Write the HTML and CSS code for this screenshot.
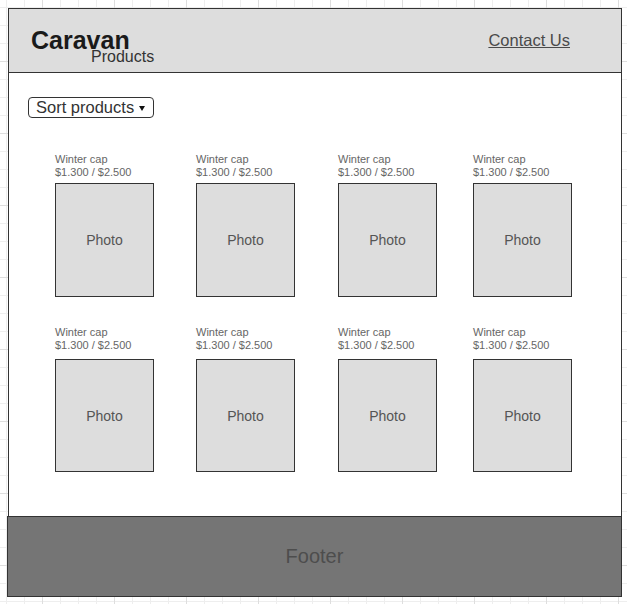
FILE: index.html
```html
<!DOCTYPE html>
<html lang="en">
<head>
    <meta charset="UTF-8">
    <meta name="viewport" content="width=device-width, initial-scale=1.0">
    <title>Caravan - Products</title>
    <link rel="stylesheet" href="styles.css">
</head>
<body>
    <div class="page">
        <header class="site-header">
            <div class="brand">
                <h1>Caravan</h1>
                <span class="subtitle">Products</span>
            </div>
            <a href="#" class="contact">Contact Us</a>
        </header>

        <main class="content">
            <button class="sort-btn">Sort products <span class="caret"></span></button>

            <div class="product-grid">
                <div class="product">
                    <div class="product-info">Winter cap<br>$1.300 / $2.500</div>
                    <div class="photo">Photo</div>
                </div>
                <div class="product">
                    <div class="product-info">Winter cap<br>$1.300 / $2.500</div>
                    <div class="photo">Photo</div>
                </div>
                <div class="product">
                    <div class="product-info">Winter cap<br>$1.300 / $2.500</div>
                    <div class="photo">Photo</div>
                </div>
                <div class="product">
                    <div class="product-info">Winter cap<br>$1.300 / $2.500</div>
                    <div class="photo">Photo</div>
                </div>
                <div class="product">
                    <div class="product-info">Winter cap<br>$1.300 / $2.500</div>
                    <div class="photo">Photo</div>
                </div>
                <div class="product">
                    <div class="product-info">Winter cap<br>$1.300 / $2.500</div>
                    <div class="photo">Photo</div>
                </div>
                <div class="product">
                    <div class="product-info">Winter cap<br>$1.300 / $2.500</div>
                    <div class="photo">Photo</div>
                </div>
                <div class="product">
                    <div class="product-info">Winter cap<br>$1.300 / $2.500</div>
                    <div class="photo">Photo</div>
                </div>
            </div>
        </main>

        <footer class="site-footer">Footer</footer>
    </div>
</body>
</html>
```

FILE: styles.css
```css
body {
    margin: 0;
    font-family: 'Liberation Sans', Arial, sans-serif;
    background-color: #ffffff;
    background-image:
        linear-gradient(to right, #dedede 1px, transparent 1px),
        linear-gradient(to bottom, #dedede 1px, transparent 1px),
        linear-gradient(to right, #eeeeee 1px, transparent 1px),
        linear-gradient(to bottom, #eeeeee 1px, transparent 1px);
    background-size: 72px 72px, 72px 72px, 18px 18px, 18px 18px;
    background-position: 42px 61px, 42px 61px, 6px 7px, 6px 7px;
    height: 604px;
}

.page {
    padding: 8px 0 0 8px;
    width: 614px;
}

.site-header {
    display: flex;
    justify-content: space-between;
    align-items: flex-start;
    height: 65px;
    box-sizing: border-box;
    padding: 19px 51px 0 22px;
    background: #dddddd;
    border: 1px solid #333333;
}

.brand h1 {
    margin: 0;
    font-size: 25px;
    line-height: 25px;
    font-weight: bold;
    color: #1a1a1a;
}

.subtitle {
    display: block;
    margin: -4px 0 0 60px;
    font-size: 16px;
    line-height: 16px;
    color: #333333;
}

.contact {
    margin-top: 4px;
    font-size: 16.5px;
    line-height: 16px;
    color: #4a4a4a;
    text-decoration: underline;
}

.content {
    height: 443px;
    box-sizing: border-box;
    padding: 24px 19px 0;
    background: #ffffff;
    border-left: 1px solid #333333;
    border-right: 1px solid #333333;
}

.sort-btn {
    display: flex;
    align-items: center;
    gap: 5px;
    height: 21px;
    padding: 0 8px 0 7px;
    font-family: inherit;
    font-size: 16.5px;
    line-height: 19px;
    color: #333333;
    background: #ffffff;
    border: 1px solid #333333;
    border-radius: 4px;
}

.caret {
    width: 0;
    height: 0;
    margin-top: 2px;
    border-left: 3px solid transparent;
    border-right: 3px solid transparent;
    border-top: 5px solid #111111;
}

.product-grid {
    display: grid;
    grid-template-columns: 141px 142px 135px 99px;
    row-gap: 29px;
    margin: 35px 0 0 27px;
}

.product-info {
    font-size: 11px;
    line-height: 13px;
    color: #666666;
    margin-bottom: 4px;
}

/* second row sits a little lower under its labels */
.product:nth-child(n+5) .product-info {
    margin-bottom: 7px;
}

.product:nth-child(n+5) .photo {
    height: 113px;
}

.photo {
    display: flex;
    align-items: center;
    justify-content: center;
    width: 99px;
    height: 114px;
    box-sizing: border-box;
    background: #dddddd;
    border: 1px solid #333333;
    font-size: 14px;
    color: #555555;
}

.site-footer {
    display: flex;
    align-items: center;
    justify-content: center;
    margin-left: -1px;
    height: 81px;
    box-sizing: border-box;
    background: #757575;
    border: 1px solid #333333;
    font-size: 20px;
    color: #4d4d4d;
}
```
